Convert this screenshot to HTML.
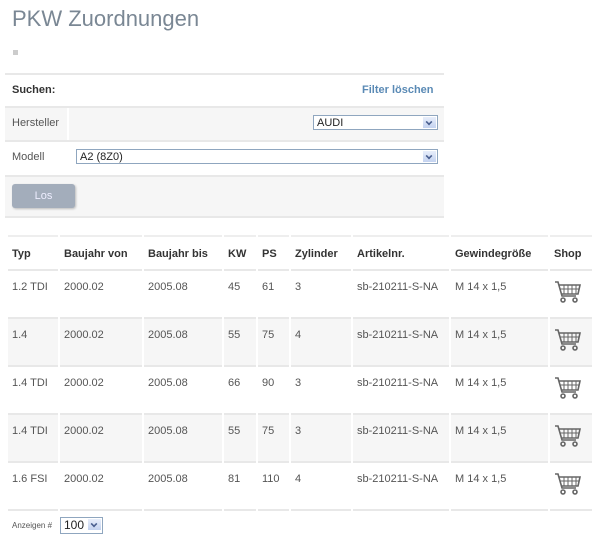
<!DOCTYPE html>
<html><head><style>
body{margin:0;background:#fff;font-family:"Liberation Sans",Arial,sans-serif;font-size:11px;color:#555;position:relative;width:600px;height:546px;overflow:hidden}
.a{position:absolute}
h1{position:absolute;left:12px;top:6px;margin:0;font-weight:normal;font-size:22px;color:#7a8794}
.sel{position:absolute;background:#fff;border:1px solid #8fa6bf;height:15px;font-size:11px;color:#222;line-height:15px;padding-left:3px;box-sizing:border-box}
.sel i{position:absolute;right:1px;top:1px;width:13px;height:11px;background:linear-gradient(#e8eefb,#c3d2f0)}
.sel i:after{content:"";position:absolute;left:3px;top:2px;width:4px;height:4px;border-right:2px solid #4a5f8f;border-bottom:2px solid #4a5f8f;transform:rotate(45deg) scale(.8)}
.line{position:absolute;height:2px;background:#e8e8e8}
table{position:absolute;border-collapse:separate;border-spacing:2px 0}
td,th{box-sizing:border-box;height:48px;border-bottom:2px solid #e8e8e8;text-align:left;vertical-align:top;padding:10px 4px 0 4px;font-weight:normal;white-space:nowrap}
th{height:36px;font-weight:bold;color:#333;padding-top:11px;border-top:2px solid #eee}
tr.g td{background:#f6f6f6}
td:last-child{padding-top:8px}
</style></head><body>
<h1>PKW Zuordnungen</h1>
<div class="a" style="left:13px;top:50px;width:5px;height:5px;background:#ccc"></div>

<div class="line" style="left:5px;top:73px;width:439px"></div>
<div class="a" style="left:12px;top:84px;font-weight:bold;color:#333">Suchen:</div>
<div class="a" style="left:362px;top:84px;font-weight:bold;color:#5a8ab5">Filter löschen</div>
<div class="line" style="left:5px;top:106px;width:439px"></div>
<div class="a" style="left:5px;top:108px;width:62px;height:32px;background:#f6f6f6"></div>
<div class="a" style="left:69px;top:108px;width:375px;height:32px;background:#f6f6f6"></div>
<div class="a" style="left:12px;top:117px">Hersteller</div>
<div class="sel" style="left:313px;top:115px;width:125px">AUDI<i></i></div>
<div class="line" style="left:5px;top:140px;width:439px"></div>
<div class="a" style="left:12px;top:151px">Modell</div>
<div class="sel" style="left:76px;top:149px;width:362px">A2 (8Z0)<i></i></div>
<div class="line" style="left:5px;top:175px;width:439px"></div>
<div class="a" style="left:5px;top:177px;width:439px;height:39px;background:#f6f6f6"></div>
<div class="a" style="left:12px;top:184px;width:63px;height:24px;background:#a3adbb;border-radius:3px;box-shadow:1px 1px 2px #bbb;color:#eef;text-align:center;line-height:24px">Los</div>
<div class="line" style="left:5px;top:216px;width:439px"></div>

<table style="left:6px;top:235px">
<tr><th style="width:50px">Typ</th><th style="width:82px">Baujahr von</th><th style="width:78px">Baujahr bis</th><th style="width:32px">KW</th><th style="width:31px">PS</th><th style="width:60px">Zylinder</th><th style="width:96px">Artikelnr.</th><th style="width:97px">Gewindegröße</th><th style="width:42px">Shop</th></tr>
<tr><td>1.2 TDI</td><td>2000.02</td><td>2005.08</td><td>45</td><td>61</td><td>3</td><td>sb-210211-S-NA</td><td>M 14 x 1,5</td><td><svg width="28" height="26" viewBox="0 0 28 26"><g fill="none" stroke="#666" stroke-width="1.6"><path d="M1 3h3l4 14h14M5 6h21l-2 9H8"/><path d="M10 6v9M14 6v9M18 6v9M22 6v9M6 10h19" stroke-width="1"/><circle cx="9" cy="21" r="2"/><circle cx="21" cy="21" r="2"/></g></svg></td></tr>
<tr class="g"><td>1.4</td><td>2000.02</td><td>2005.08</td><td>55</td><td>75</td><td>4</td><td>sb-210211-S-NA</td><td>M 14 x 1,5</td><td><svg width="28" height="26" viewBox="0 0 28 26"><g fill="none" stroke="#666" stroke-width="1.6"><path d="M1 3h3l4 14h14M5 6h21l-2 9H8"/><path d="M10 6v9M14 6v9M18 6v9M22 6v9M6 10h19" stroke-width="1"/><circle cx="9" cy="21" r="2"/><circle cx="21" cy="21" r="2"/></g></svg></td></tr>
<tr><td>1.4 TDI</td><td>2000.02</td><td>2005.08</td><td>66</td><td>90</td><td>3</td><td>sb-210211-S-NA</td><td>M 14 x 1,5</td><td><svg width="28" height="26" viewBox="0 0 28 26"><g fill="none" stroke="#666" stroke-width="1.6"><path d="M1 3h3l4 14h14M5 6h21l-2 9H8"/><path d="M10 6v9M14 6v9M18 6v9M22 6v9M6 10h19" stroke-width="1"/><circle cx="9" cy="21" r="2"/><circle cx="21" cy="21" r="2"/></g></svg></td></tr>
<tr class="g"><td>1.4 TDI</td><td>2000.02</td><td>2005.08</td><td>55</td><td>75</td><td>3</td><td>sb-210211-S-NA</td><td>M 14 x 1,5</td><td><svg width="28" height="26" viewBox="0 0 28 26"><g fill="none" stroke="#666" stroke-width="1.6"><path d="M1 3h3l4 14h14M5 6h21l-2 9H8"/><path d="M10 6v9M14 6v9M18 6v9M22 6v9M6 10h19" stroke-width="1"/><circle cx="9" cy="21" r="2"/><circle cx="21" cy="21" r="2"/></g></svg></td></tr>
<tr><td>1.6 FSI</td><td>2000.02</td><td>2005.08</td><td>81</td><td>110</td><td>4</td><td>sb-210211-S-NA</td><td>M 14 x 1,5</td><td><svg width="28" height="26" viewBox="0 0 28 26"><g fill="none" stroke="#666" stroke-width="1.6"><path d="M1 3h3l4 14h14M5 6h21l-2 9H8"/><path d="M10 6v9M14 6v9M18 6v9M22 6v9M6 10h19" stroke-width="1"/><circle cx="9" cy="21" r="2"/><circle cx="21" cy="21" r="2"/></g></svg></td></tr>
</table>

<div class="a" style="left:12px;top:521px;font-size:8px">Anzeigen #</div>
<div class="sel" style="left:60px;top:517px;width:43px;height:17px;font-size:12px">100<i></i></div>
</body></html>
